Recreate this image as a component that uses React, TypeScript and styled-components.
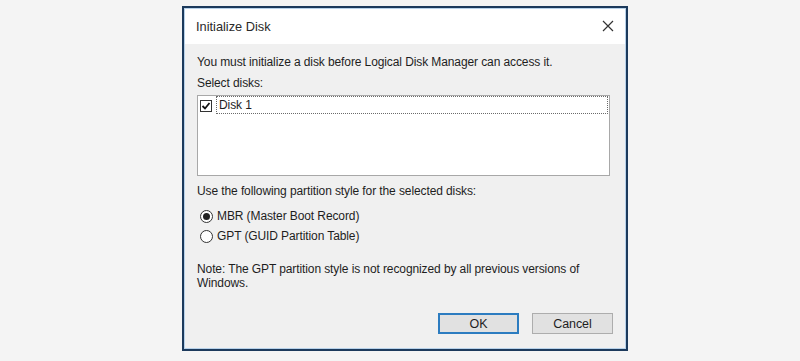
import { FC } from "react";
import styled, { createGlobalStyle } from "styled-components";

const GlobalStyle = createGlobalStyle`
  html, body {
    margin: 0;
    padding: 0;
    background: #f4f4f4;
  }
  * {
    box-sizing: border-box;
  }
`;

const Page = styled.div`
  width: 800px;
  height: 361px;
  padding: 6px 0 0 182px;
  background: #f4f4f4;
  font-family: "Liberation Sans", Arial, sans-serif;
  font-size: 12px;
  letter-spacing: -0.1px;
  color: #1e1e1e;
`;

const Dialog = styled.div`
  width: 446px;
  height: 345px;
  border: 2px solid #1c3a5c;
  box-shadow: inset 0 0 0 1px #b8d2ea;
  display: flex;
  flex-direction: column;
  background: #f0f0f0;
`;

const TitleBar = styled.div`
  height: 35px;
  background: #ffffff;
  display: flex;
  align-items: center;
  justify-content: space-between;
  padding: 0 11px 0 11px;
  margin: 1px 1px 0 1px;
`;

const Title = styled.span`
  font-size: 12.8px;
  letter-spacing: 0;
  color: #2a2a2a;
`;

const CloseButton = styled.div`
  width: 12px;
  height: 12px;
  display: flex;
  align-items: center;
  justify-content: center;
  margin-top: -2px;
`;

const Body = styled.div`
  flex: 1;
  display: flex;
  flex-direction: column;
  padding: 10px 13px 0 13px;
`;

const Line = styled.div<{ $gap?: number }>`
  height: 16px;
  line-height: 16px;
  margin-top: ${(p) => p.$gap ?? 0}px;
  white-space: nowrap;
`;

const ListBox = styled.div`
  margin-top: 4px;
  width: 413px;
  height: 81px;
  background: #ffffff;
  border: 1px solid #a8a8a8;
  padding: 0 1px 0 1px;
`;

const ListRow = styled.div`
  display: flex;
  align-items: center;
  height: 18px;
`;

const CheckBox = styled.div`
  width: 12px;
  height: 12px;
  margin: 2px 4px 0 1px;
  border: 1px solid #333333;
  background: #ffffff;
  display: flex;
  align-items: center;
  justify-content: center;
`;

const FocusLabel = styled.div`
  flex: 1;
  height: 18px;
  line-height: 16px;
  border: 1px dotted #6a6a6a;
  padding-left: 2px;
`;

const RadioRow = styled.div<{ $gap?: number }>`
  display: flex;
  align-items: center;
  height: 18px;
  margin-top: ${(p) => p.$gap ?? 0}px;
  padding-left: 3px;
`;

const Radio = styled.div<{ $checked?: boolean }>`
  width: 13px;
  height: 13px;
  border-radius: 50%;
  border: 1px solid #333333;
  background: #ffffff;
  margin-right: 4px;
  display: flex;
  align-items: center;
  justify-content: center;
  &::after {
    content: "";
    display: ${(p) => (p.$checked ? "block" : "none")};
    width: 7px;
    height: 7px;
    border-radius: 50%;
    background: #222222;
  }
`;

const Note = styled.div`
  margin-top: 17px;
  line-height: 14px;
  width: 400px;
`;

const ButtonRow = styled.div`
  margin-top: auto;
  margin-bottom: 15px;
  display: flex;
  justify-content: flex-end;
  gap: 13px;
`;

const Button = styled.div<{ $primary?: boolean }>`
  width: 81px;
  height: 21px;
  display: flex;
  align-items: center;
  justify-content: center;
  background: #e1e1e1;
  border: ${(p) => (p.$primary ? "2px solid #2c7cc0" : "1px solid #adadad")};
  font-size: 12.5px;
  color: #1e1e1e;
`;

const App: FC = () => {
  return (
    <Page>
      <GlobalStyle />
      <Dialog>
        <TitleBar>
          <Title>Initialize Disk</Title>
          <CloseButton>
            <svg width="12" height="12" viewBox="0 0 12 12">
              <path d="M1 1 L11 11 M11 1 L1 11" stroke="#333" strokeWidth="1.2" />
            </svg>
          </CloseButton>
        </TitleBar>
        <Body>
          <Line>You must initialize a disk before Logical Disk Manager can access it.</Line>
          <Line $gap={5}>Select disks:</Line>
          <ListBox>
            <ListRow>
              <CheckBox>
                <svg width="10" height="10" viewBox="0 0 10 10">
                  <path d="M1.5 5 L4 7.5 L8.5 2" stroke="#111" strokeWidth="1.8" fill="none" />
                </svg>
              </CheckBox>
              <FocusLabel>Disk 1</FocusLabel>
            </ListRow>
          </ListBox>
          <Line $gap={7}>Use the following partition style for the selected disks:</Line>
          <RadioRow $gap={8}>
            <Radio $checked />
            MBR (Master Boot Record)
          </RadioRow>
          <RadioRow $gap={2}>
            <Radio />
            GPT (GUID Partition Table)
          </RadioRow>
          <Note>
            Note: The GPT partition style is not recognized by all previous versions of Windows.
          </Note>
          <ButtonRow>
            <Button $primary>OK</Button>
            <Button>Cancel</Button>
          </ButtonRow>
        </Body>
      </Dialog>
    </Page>
  );
};

export default App;
